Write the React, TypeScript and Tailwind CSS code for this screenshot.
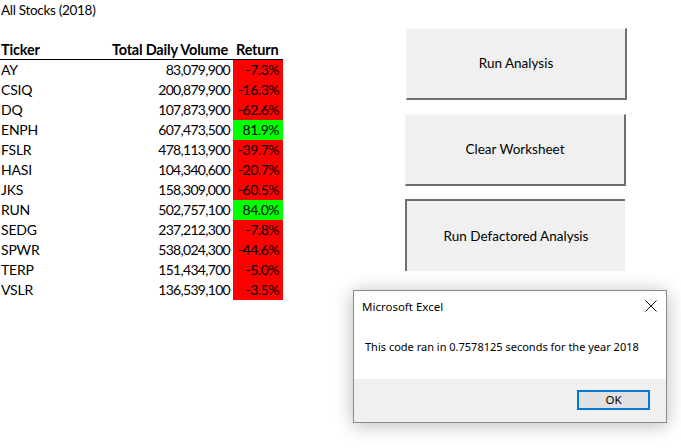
import React from 'react';

const rows = [
  { ticker: 'AY', volume: '83,079,900', ret: '-7.3%', up: false },
  { ticker: 'CSIQ', volume: '200,879,900', ret: '-16.3%', up: false },
  { ticker: 'DQ', volume: '107,873,900', ret: '-62.6%', up: false },
  { ticker: 'ENPH', volume: '607,473,500', ret: '81.9%', up: true },
  { ticker: 'FSLR', volume: '478,113,900', ret: '-39.7%', up: false },
  { ticker: 'HASI', volume: '104,340,600', ret: '-20.7%', up: false },
  { ticker: 'JKS', volume: '158,309,000', ret: '-60.5%', up: false },
  { ticker: 'RUN', volume: '502,757,100', ret: '84.0%', up: true },
  { ticker: 'SEDG', volume: '237,212,300', ret: '-7.8%', up: false },
  { ticker: 'SPWR', volume: '538,024,300', ret: '-44.6%', up: false },
  { ticker: 'TERP', volume: '151,434,700', ret: '-5.0%', up: false },
  { ticker: 'VSLR', volume: '136,539,100', ret: '-3.5%', up: false },
];

export default function App() {
  return (
    <div className="relative w-[681px] h-[448px] overflow-hidden bg-white flex text-black font-['Lato','Liberation_Sans',sans-serif]">
      {/* sheet */}
      <div className="w-[283px] shrink-0 text-[14px] whitespace-nowrap">
        <div className="h-[20px] leading-[20px] pl-[1px] text-[13.5px] tracking-[-0.3px]">All Stocks (2018)</div>
        <div className="h-[20px]" />
        <div className="flex h-[20px] leading-[19px] font-bold text-[14.5px] tracking-[-0.2px] border-b-[1.5px] border-black">
          <div className="w-[106px] pl-[1px]">Ticker</div>
          <div className="w-[127px] text-right pr-[5px]">Total Daily Volume</div>
          <div className="w-[50px] pl-[3px]">Return</div>
        </div>
        {rows.map((r) => (
          <div key={r.ticker} className="flex h-[20px] leading-[20px]">
            <div className="w-[106px] pl-[1px] tracking-[-0.2px]">{r.ticker}</div>
            <div className="w-[127px] text-right pr-[3px] tracking-[-0.7px]">{r.volume}</div>
            <div className={`w-[50px] text-right pr-[4px] tracking-[-0.5px] ${r.up ? 'bg-[#00ff00]' : 'bg-[#ff0000]'}`}>{r.ret}</div>
          </div>
        ))}
      </div>

      {/* macro buttons */}
      <div className="flex flex-col pl-[122px] pt-[28px] text-[13.5px]">
        <div className="w-[221px] h-[72px] ml-[1px] flex items-center justify-center bg-[#f0f0f0] border-t border-l border-t-[#f7f7f7] border-l-[#f7f7f7] border-r-2 border-b-2 border-r-[#6e6e6e] border-b-[#6e6e6e]">
          Run Analysis
        </div>
        <div className="w-[221px] h-[72px] mt-[14px] flex items-center justify-center bg-[#f0f0f0] border-t border-l border-t-[#f7f7f7] border-l-[#f7f7f7] border-r-2 border-b-2 border-r-[#6e6e6e] border-b-[#6e6e6e]">
          Clear Worksheet
        </div>
        <div className="w-[220px] h-[72px] mt-[13px] flex items-center justify-center bg-[#f0f0f0] border-t-2 border-l-2 border-t-[#6e6e6e] border-l-[#6e6e6e]">
          Run Defactored Analysis
        </div>
      </div>

      {/* message box */}
      <div className="absolute left-[353px] top-[290px] w-[314px] h-[133px] flex flex-col bg-white border border-[#8a8a8a] shadow-[0_2px_18px_rgba(0,0,0,0.28)] font-['Noto_Sans','Liberation_Sans',sans-serif] text-[11px]">
        <div className="flex items-center justify-between h-[30px] pl-[8px] pr-[9px] pt-[1px]">
          <span className="text-[11.5px]">Microsoft Excel</span>
          <svg width="12" height="12" viewBox="0 0 12 12" className="mt-[-2px]">
            <path d="M0.5 0.5 L11.5 11.5 M11.5 0.5 L0.5 11.5" stroke="#111" strokeWidth="1" fill="none" />
          </svg>
        </div>
        <div className="flex-1 flex items-center pl-[11px] pb-[6px]">
          This code ran in 0.7578125 seconds for the year 2018
        </div>
        <div className="h-[43px] bg-[#f0f0f0] flex justify-end items-start pt-[11px] pr-[16px]">
          <div className="w-[73px] h-[20px] flex items-center justify-center bg-[#e1e1e1] border-2 border-[#0078d7] text-[11.5px]">
            OK
          </div>
        </div>
      </div>
    </div>
  );
}
